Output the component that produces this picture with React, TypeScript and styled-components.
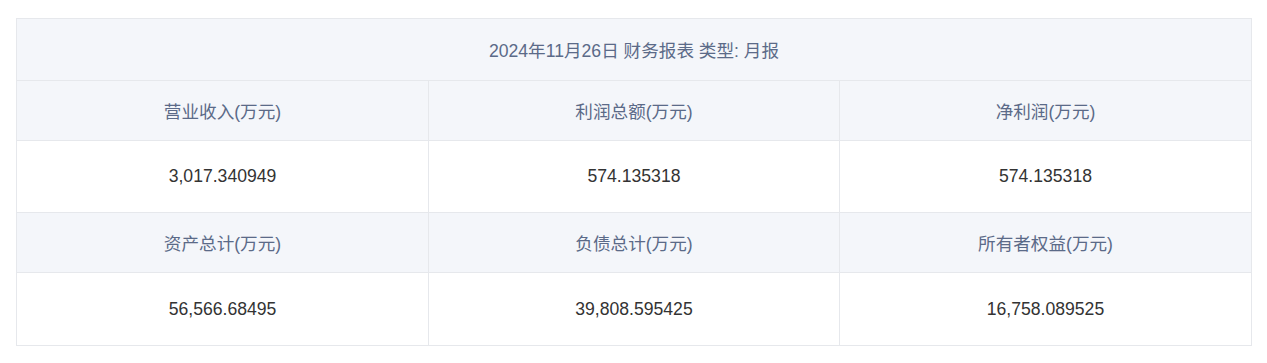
import React from 'react';
import styled, { createGlobalStyle } from 'styled-components';

const GlobalStyle = createGlobalStyle`
  body { margin: 0; background: #fff; font-family: "Liberation Sans", "Noto Sans CJK SC", sans-serif; }
`;

const Page = styled.div`
  padding: 18px 15px 0 16px;
`;

const Table = styled.div`
  width: 1236px;
  display: grid;
  grid-template-columns: 412px 411px 1fr;
  border: 1px solid #e6e8ec;
  box-sizing: border-box;
  font-size: 17.6px;
`;

const Title = styled.div`
  grid-column: 1 / -1;
  height: 61px;
  display: flex; align-items: center; justify-content: center;
  background: #f4f6fa;
  color: #5b6a88;
  border-bottom: 1px solid #e6e8ec;
`;

const Cell = styled.div<{ $head?: boolean; $last?: boolean; $bottom?: boolean }>`
  height: ${(p) => (p.$head ? '60px' : '72px')};
  box-sizing: border-box;
  display: flex; align-items: center; justify-content: center;
  background: ${(p) => (p.$head ? '#f4f6fa' : '#fff')};
  color: ${(p) => (p.$head ? '#5b6a88' : '#333')};
  border-right: ${(p) => (p.$last ? 'none' : '1px solid #e6e8ec')};
  border-bottom: ${(p) => (p.$bottom ? 'none' : '1px solid #e6e8ec')};
`;

const rows = [
  { head: ['营业收入(万元)', '利润总额(万元)', '净利润(万元)'], data: ['3,017.340949', '574.135318', '574.135318'] },
  { head: ['资产总计(万元)', '负债总计(万元)', '所有者权益(万元)'], data: ['56,566.68495', '39,808.595425', '16,758.089525'] },
];

export default function App() {
  return (
    <Page>
      <GlobalStyle />
      <Table>
        <Title>2024年11月26日 财务报表 类型: 月报</Title>
        {rows.map((r, ri) => (
          <React.Fragment key={ri}>
            {r.head.map((h, i) => (
              <Cell key={'h' + i} $head $last={i === 2}>{h}</Cell>
            ))}
            {r.data.map((d, i) => (
              <Cell key={'d' + i} $last={i === 2} $bottom={ri === rows.length - 1}>{d}</Cell>
            ))}
          </React.Fragment>
        ))}
      </Table>
    </Page>
  );
}
